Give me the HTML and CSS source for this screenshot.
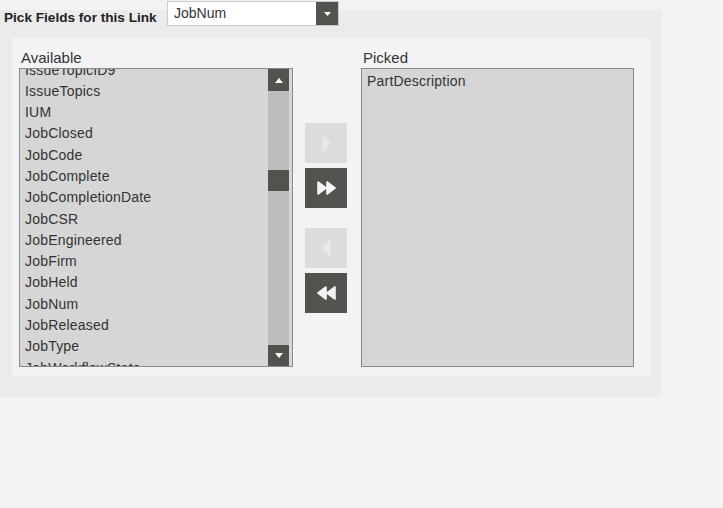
FILE: index.html
```
<!DOCTYPE html>
<html>
<head>
<meta charset="utf-8">
<link rel="stylesheet" href="styles.css">
</head>
<body>
<div class="header">
  <span class="title">Pick Fields for this Link</span>
  <div class="select">
    <span class="select-value">JobNum</span>
    <span class="select-btn"><svg width="7" height="4" viewBox="0 0 7 4"><path d="M0 0H7L3.5 4Z" fill="#fff"/></svg></span>
  </div>
</div>
<div class="panel">
  <div class="inner">
    <div class="label">Available</div>
    <div></div>
    <div class="label">Picked</div>

    <div class="listbox">
      <div class="items scrolled">
        <div class="item">IssueTopicID9</div>
        <div class="item">IssueTopics</div>
        <div class="item">IUM</div>
        <div class="item">JobClosed</div>
        <div class="item">JobCode</div>
        <div class="item">JobComplete</div>
        <div class="item">JobCompletionDate</div>
        <div class="item">JobCSR</div>
        <div class="item">JobEngineered</div>
        <div class="item">JobFirm</div>
        <div class="item">JobHeld</div>
        <div class="item">JobNum</div>
        <div class="item">JobReleased</div>
        <div class="item">JobType</div>
        <div class="item">JobWorkflowState</div>
      </div>
      <div class="scrollbar">
        <div class="sb-btn sb-up"><svg width="8" height="5" viewBox="0 0 8 5"><path d="M4 0L8 5H0Z" fill="#fff"/></svg></div>
        <div class="sb-track"><div class="sb-thumb"></div></div>
        <div class="sb-btn sb-down"><svg width="8" height="5" viewBox="0 0 8 5"><path d="M0 0H8L4 5Z" fill="#fff"/></svg></div>
      </div>
    </div>

    <div class="movers">
      <div class="mv disabled"><svg width="9" height="18" viewBox="0 0 9 18"><path d="M1 1L8 9L1 17Z" fill="#e8e8e8" stroke="#e8e8e8" stroke-width="1.5" stroke-linejoin="round"/></svg></div>
      <div class="mv"><svg width="19" height="14" viewBox="0 0 19 14"><path d="M1 1L9 7L1 13Z M10 1L18 7L10 13Z" fill="#f4f4f4" stroke="#f4f4f4" stroke-width="1.6" stroke-linejoin="round"/></svg></div>
      <div class="mv disabled gap-top"><svg width="9" height="18" viewBox="0 0 9 18"><path d="M8 1L1 9L8 17Z" fill="#e8e8e8" stroke="#e8e8e8" stroke-width="1.5" stroke-linejoin="round"/></svg></div>
      <div class="mv"><svg width="19" height="14" viewBox="0 0 19 14"><path d="M18 1L10 7L18 13Z M9 1L1 7L9 13Z" fill="#f4f4f4" stroke="#f4f4f4" stroke-width="1.6" stroke-linejoin="round"/></svg></div>
    </div>

    <div class="listbox picked">
      <div class="items">
        <div class="item">PartDescription</div>
      </div>
    </div>
  </div>
</div>
</body>
</html>
```
FILE: styles.css
```
html, body {
  margin: 0;
  padding: 0;
}
body {
  background: #f3f3f5;
  font-family: "Liberation Sans", Arial, sans-serif;
  color: #333;
  width: 723px;
  height: 508px;
  overflow: hidden;
}
.header {
  position: relative;
  z-index: 1;
  display: flex;
  align-items: flex-start;
  padding: 1px 0 0 4px;
  height: 25px;
}
.title {
  font-weight: bold;
  font-size: 13.6px;
  line-height: 16px;
  margin-top: 9px;
  color: #222;
  width: 163px;
  white-space: nowrap;
}
.select {
  width: 170px;
  height: 23px;
  border: 1px solid #c9c9c9;
  background: #fff;
  display: flex;
  align-items: stretch;
}
.select-value {
  flex: 1;
  font-size: 14px;
  line-height: 23px;
  padding-left: 6px;
  color: #333;
}
.select-btn {
  width: 22px;
  background: #54524f;
  display: flex;
  align-items: center;
  justify-content: center;
}
.panel {
  margin-top: -16px;
  width: 638px;
  height: 338px;
  padding: 28px 12px 21px 12px;
  background: #ebebeb;
  border-radius: 0 4px 4px 0;
}
.inner {
  height: 329px;
  background: #f3f3f5;
  padding: 0 16px 9px 7px;
  display: grid;
  grid-template-columns: 274px 44px 273px;
  grid-template-rows: 30px 299px;
  column-gap: 12px;
}
.label {
  font-size: 15px;
  line-height: 20px;
  padding-top: 10px;
  padding-left: 2px;
  color: #333;
}
.listbox {
  box-sizing: border-box;
  border: 1px solid #8a8a8a;
  background: #d6d6d6;
  display: flex;
  overflow: hidden;
}
.items {
  flex: 1;
  min-width: 0;
  overflow: hidden;
  padding-left: 5px;
}
.items.scrolled .item:first-child {
  margin-top: -9.5px;
}
.picked .items {
  padding-top: 2px;
}
.item {
  font-size: 14px;
  letter-spacing: 0.2px;
  height: 21.3px;
  line-height: 21.3px;
  white-space: nowrap;
  color: #333;
}
.scrollbar {
  width: 21px;
  margin-right: 3px;
  display: flex;
  flex-direction: column;
}
.sb-btn {
  background: #54524f;
  display: flex;
  align-items: center;
  justify-content: center;
}
.sb-up { height: 22px; }
.sb-down { height: 21px; }
.sb-track {
  flex: 1;
  background: #bdbdbd;
}
.sb-thumb {
  margin-top: 79px;
  height: 21px;
  background: #54524f;
}
.movers {
  align-self: center;
  display: flex;
  flex-direction: column;
  gap: 5px;
}
.mv {
  width: 42px;
  height: 40px;
  background: #54524f;
  display: flex;
  align-items: center;
  justify-content: center;
}
.mv.disabled {
  background: #dcdcdc;
}
.mv.gap-top {
  margin-top: 15px;
}
```
